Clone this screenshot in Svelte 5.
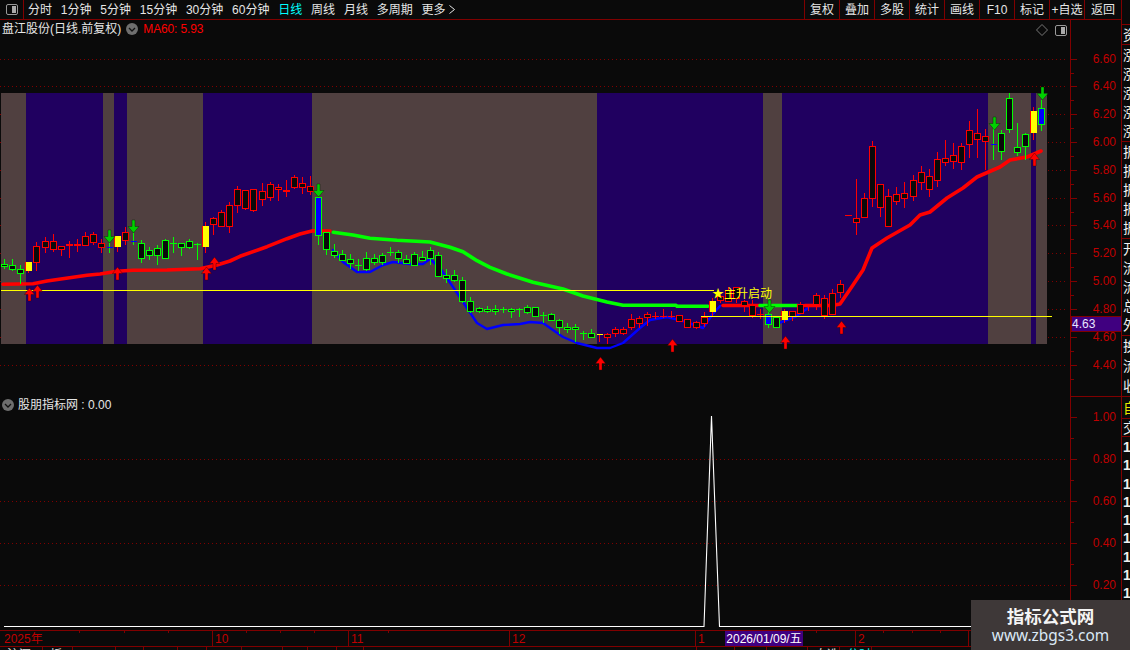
<script>
  const leftTools = [
    { t: '分时' }, { t: '1分钟' }, { t: '5分钟' }, { t: '15分钟' }, { t: '30分钟' }, { t: '60分钟' },
    { t: '日线', on: true }, { t: '周线' }, { t: '月线' }, { t: '多周期' }
  ];
  const rightTools = ['复权', '叠加', '多股', '统计', '画线', 'F10', '标记', '+自选', '返回'];

  const bands = [
    [1, 26, 'b'], [26, 103, 'p'], [103, 114, 'b'], [114, 127, 'p'], [127, 203, 'b'], [203, 312, 'p'],
    [312, 597, 'b'], [597, 763, 'p'], [763, 782, 'b'], [782, 988, 'p'], [988, 1031, 'b'], [1031, 1036, 'p'], [1036, 1047, 'b']
  ];

  const D = [
    [259.3,264.3,266.3,269.3,'g'],[259.3,264.7,269,271,'g'],[265,269.3,272.7,284,'g'],[262,262,271,273,'y'],
    [241.7,246.3,262.3,271,'r'],[237.3,241.3,246.7,252.7,'r'],[234,241.3,248.7,251.7,'r'],[246.3,246.3,248.7,256,'r'],
    [241.3,243.7,244.7,257.7,'r'],[239,243.7,244.7,251.7,'r'],[232.3,236.3,244.7,245,'r'],[232,234.3,241.7,245,'r'],
    [239,243.3,247.3,253,'r'],[243,247,247.6,253,'b'],[236,236,247,251.7,'y'],[227.3,232.3,239.7,245,'r'],
    [233,241,241.6,245,'b'],[240,243.3,257.7,262.7,'g'],[247.3,250.3,255.3,260,'g'],[245,248.3,254.7,265,'g'],
    [239.3,240.3,257.7,258.3,'g'],[237.3,243,243.3,252.7,'g'],[243.3,243.3,247.3,256,'g'],[239,241.3,247.3,249,'g'],
    [243,244,244.3,260,'g'],[222,226,247,252.7,'y'],[217.3,218.3,223.7,235,'r'],[210,212.3,225.7,225.7,'r'],
    [202,205.3,225.7,232.7,'r'],[186,189.3,204.7,212.7,'r'],[190.3,190.3,207.7,210,'r'],[189.3,189.3,209.7,211.7,'r'],
    [183,191.3,198.7,206,'r'],[181.7,184.3,196.7,201,'r'],[184.3,187.3,189.3,201,'r'],[180,190.3,190.7,196.7,'r'],
    [175.3,177.3,187.3,189,'r'],[177,183.3,186.7,193.7,'r'],[176,186.3,190.7,195,'r'],[197,197,235,245,'b'],
    [232.3,232.3,248.7,255,'g'],[244,251.3,254.7,258,'g'],[250,254.3,259.7,260.7,'g'],[254,259.3,262.7,269,'g'],
    [259,265,265,270.7,'g'],[252.3,258.3,269.3,270.7,'g'],[254,258.3,261.7,265,'g'],[253.3,255.3,261.7,265,'g'],
    [247.3,251.7,251.7,256,'g'],[250,252.3,257.7,262.7,'g'],[255,259.3,262.7,263.3,'g'],[252.3,254.3,264.7,265,'g'],
    [251,257.3,259.7,260,'g'],[247.3,250.3,257.7,265,'g'],[252.3,255.3,276.3,277.3,'g'],[269,275.3,277.7,282.7,'g'],
    [270,275.3,279.7,281.7,'g'],[277.3,280.3,301.3,302.7,'g'],[297,301.3,311.3,312.7,'g'],[306.7,308.3,311.3,312.7,'g'],
    [306,309.3,311.3,312.7,'g'],[305,309.3,311.3,315,'g'],[306.7,308.7,308.7,312.7,'g'],[308.3,309.3,311.3,318.3,'g'],
    [308.3,309,309,317,'g'],[305,307.3,312.3,314.3,'g'],[307,307.3,315.7,316.7,'g'],[311.7,314.7,314.7,322.7,'g'],
    [313.3,314.3,320.3,320.7,'g'],[319,320.3,326.7,334,'g'],[323.3,326.7,329.3,332.7,'g'],[324,327.3,329.3,341.7,'g'],
    [330.7,333.3,333.3,340,'g'],[329,333.3,337.3,337.7,'g'],[334,334,334.6,341.7,'d'],[333.3,334.3,336.7,344,'r'],
    [327.3,329.3,333.3,336.7,'r'],[327.3,329.3,333.3,335,'r'],[314.3,319.3,326.7,330,'r'],[315.7,318.3,322.7,328.3,'r'],
    [311.7,314,316.7,326,'r'],[311.7,316,316,319.3,'r'],[309,316,316,318.3,'r'],[311,316,316,318,'r'],
    [315,315.3,320.7,321.7,'r'],[319,319.3,327.3,327.7,'r'],[320.7,322.3,327.3,329,'r'],[311.7,316.7,322.7,326.7,'r'],
    [298.3,301.3,311.7,316,'y'],[295,296,300,303,'r'],[286.7,290,300.7,301.7,'r'],[287,287.3,298.3,303.3,'r'],
    [300,300.7,305.3,311.7,'r'],[300,305.3,315,318.3,'r'],[309,314,314,319.3,'r'],[298,314,324,327.7,'b'],
    [316.7,316.7,326.7,327.7,'g'],[309,311,320,323,'y'],[311.3,311.3,315.7,321,'r'],[301.7,304.3,312.7,313.3,'r'],
    [305,305,305.5,311,'r'],[293.3,295.3,304.3,310,'r'],[295,298.3,315,319.3,'r'],[289.3,293.3,314.3,315,'r'],
    [280,284.3,291.7,298.3,'r'],[215.3,215.3,215.3,215.3,'r'],[179,218.3,221.7,235,'r'],[192.7,198.3,216.7,216.7,'r'],
    [141,146.3,198.3,207.3,'r'],[184.3,184.3,207.3,216.7,'r'],[189.3,196.3,225.7,227,'r'],[187.3,194.3,201.3,205,'r'],
    [182,193.3,198.3,207.7,'r'],[175,180.3,196.3,200.7,'r'],[166.3,172.3,182.3,189.7,'r'],[169.3,176.3,189.3,196.7,'r'],
    [152,159.3,180.3,186.7,'r'],[140,158.3,162.3,165.7,'r'],[143.3,155.3,161.3,168.7,'r'],[143.3,146.3,162.3,170,'r'],
    [121,130.3,144.3,158,'r'],[109,133.3,139.3,158,'r'],[129.3,136.3,141.3,170,'r'],[118,143.5,144.2,160,'b'],
    [130,133.3,151.3,160,'g'],[93,98.3,129.3,132.7,'g'],[123,147.3,152.3,156,'g'],[133.3,134.3,146.3,160,'g'],
    [107.3,111.3,132.7,140,'y'],[100,108,124,130.7,'b']
  ];
  const candles = D.map((c, i) => {
    const x = Math.round(4.33 + 8.037 * i);
    const [hi, top, bot, lo, k] = c;
    return { x, hi: Math.round(hi), top: Math.round(top), bot: Math.round(bot), lo: Math.round(lo), k };
  });

  const pts = (a) => a.map((p) => p.join(',')).join(' ');
  const redA = pts([[3,284.3],[33,283.7],[47,281],[87,275.3],[100,274],[117,271.3],[133,270.3],[167,270],[200,268.7],[217,265],[230,261],[240,256.3],[267,246.7],[287,238.7],[300,234],[313,230.7],[330,231]]);
  const redB = pts([[723,305.5],[760,305.5]]);
  const redC = pts([[805,305.5],[832,305.5],[840,304],[853,285],[863,270],[872,248],[887,238],[910,225],[920,215],[930,212],[947,198],[963,188],[977,177],[1000,167],[1010,160],[1027,157],[1041,151]]);
  const greenA = pts([[333.3,232.3],[353,235],[370,238.3],[397,240.3],[430,242],[450,247.3],[463,251.7],[477,260.7],[490,267.3],[507,274],[533,282.3],[563,289],[583,296],[607,302],[623,305.3],[676,305.3],[677,306.3],[708,306.3]]);
  const greenB = pts([[760,305.5],[798,305.5]]);
  const blueA = pts([[333,250],[343,262],[357,272],[370,272],[383,265],[393,262],[410,264],[423,264],[430,259],[440,268],[453,287],[463,302],[477,323],[487,329],[503,325],[520,324],[530,322],[543,323],[563,337],[577,343],[597,348],[610,348],[623,343],[640,328],[650,320],[667,317],[683,321],[703,328],[712,315],[720,306]]);
  const blueB = pts([[780,322.7],[795,317],[808,308]]);

  const upArrows = [[29,288],[37,285],[117,267],[206,267],[214,257],[600,357],[672,339],[785,336],[841,321],[1034,153]];
  const downArrows = [[109,243],[133,233],[318,197],[769,313],[994,130],[1042,100]];

  const mainLevels = ['6.60','6.40','6.20','6.00','5.80','5.60','5.40','5.20','5.00','4.80','4.60','4.40']
    .map((t, i) => ({ t, y: Math.round(58.5 + 27.83 * i) }));
  const subLevels = ['1.00','0.80','0.60','0.40','0.20'].map((t, i) => ({ t, y: Math.round(416.5 + 42 * i) }));

  const minorX = [79, 124, 168, 246, 280, 314, 388, 816, 883, 912, 940];
  const months = [
    { x: 212, t: '10' }, { x: 348, t: '11' }, { x: 509, t: '12' }, { x: 695, t: '1' }, { x: 855, t: '2' }, { x: 968, t: '' }
  ];

  const sideGroups = [
    { rows: [], h: 25 },
    { rows: ['资'], h: 20 },
    { rows: ['涨', '涨', '涨', '涨', '涨'], h: 97 },
    { rows: ['振', '振', '振', '振', '振'], h: 97 },
    { rows: ['开', '流', '流', '总', '外'], h: 97 },
    { rows: ['换', '流', '收'], h: 61 },
    { rows: ['自'], h: 22, yellow: true },
    { rows: ['交'], h: 18 }
  ];
  const ones = Array.from({ length: 11 }, () => '1');
  const tabs = [
    { t: '沪深', w: 43 }, { t: '板块', w: 30 }, { w: 43 }, { w: 28 }, { w: 34 },
    { w: 29 }, { w: 35 }, { w: 41 }, { w: 25 }, { w: 29 }, { w: 27 },
    { w: 333 }, { w: 38 }, { w: 32 }, { w: 41 }, { t: '自选', w: 32 }, { t: '分时', w: 32, on: true }
  ];
</script>

<div class="app">
  <div class="left">
    <header class="toolbar">
      <div class="logo-box"><span class="panel-icon"><i></i></span></div>
      <nav class="periods">
        {#each leftTools as item}
          <span class:on={item.on}>{item.t}</span>
        {/each}
        <span class="more">更多<svg viewBox="0 0 6 9" width="6" height="9"><path d="M.5.5l5 4-5 4" fill="none" stroke="#e6e6e6"/></svg></span>
      </nav>
      <nav class="actions">
        {#each rightTools as t}
          <span>{t}</span>
        {/each}
      </nav>
    </header>

    <div class="body">
      <div class="charts">
        <section class="pane main">
          <div class="legend">
            <span class="name">盘江股份(日线.前复权)</span>
            <span class="chev"><svg viewBox="0 0 12 12" width="12" height="12"><circle cx="6" cy="6" r="6" fill="#6e6e6e"/><path d="M3 5l3 3 3-3" fill="none" stroke="#111" stroke-width="1.3"/></svg></span>
            <span class="ma">MA60: 5.93</span>
          </div>
          <div class="corner">
            <svg viewBox="0 0 12 12" width="12" height="12"><path d="M6 .5L11.5 6 6 11.5.5 6z" fill="none" stroke="#777"/></svg>
            <span class="panel-icon"><i></i></span>
          </div>
          <svg class="plot" viewBox="0 20 1070 377" width="1070" height="377">
            {#each mainLevels as l}
              <line x1="0" x2="1067" y1={l.y + 0.5} y2={l.y + 0.5} class="dots" />
            {/each}
            {#each bands as b}
              <rect x={b[0]} y="93" width={b[1] - b[0]} height="251" fill={b[2] === 'b' ? '#504040' : '#200060'} />
            {/each}
            <polyline points={blueA} class="ma-blue" />
            <polyline points={blueB} class="ma-blue" />
            <polyline points={redA} class="ma-red" />
            <polyline points={redB} class="ma-red" />
            <polyline points={redC} class="ma-red" />
            <polyline points={greenA} class="ma-green" />
            <polyline points={greenB} class="ma-green" />

            <g shape-rendering="crispEdges">
              {#each candles as c}
                {#if c.k === 'r'}
                  <line x1={c.x + 0.5} x2={c.x + 0.5} y1={c.hi} y2={c.lo} stroke="#f00" />
                  {#if c.bot - c.top < 1}
                    <line x1={c.x - 3} x2={c.x + 4} y1={c.top + 0.5} y2={c.top + 0.5} stroke="#f00" />
                  {:else}
                    <rect x={c.x - 2.5} y={c.top + 0.5} width="6" height={c.bot - c.top} fill="#0a0a0a" stroke="#f00" />
                  {/if}
                {:else if c.k === 'g'}
                  <line x1={c.x + 0.5} x2={c.x + 0.5} y1={c.hi} y2={c.lo} stroke="#0f0" />
                  {#if c.bot - c.top < 1}
                    <line x1={c.x - 3} x2={c.x + 4} y1={c.top + 0.5} y2={c.top + 0.5} stroke="#0f0" />
                  {:else}
                    <rect x={c.x - 2.5} y={c.top + 0.5} width="6" height={c.bot - c.top} fill="#0a0a0a" stroke="#0f0" />
                  {/if}
                {:else if c.k === 'y'}
                  <line x1={c.x + 0.5} x2={c.x + 0.5} y1={c.hi} y2={c.lo} stroke="#f00" />
                  <rect x={c.x - 2} y={c.top} width="6" height={c.bot - c.top} fill="#ff0" />
                  <rect x={c.x - 3} y={c.top} width="1" height={c.bot - c.top} fill="#f00" />
                {:else if c.k === 'b'}
                  <line x1={c.x + 0.5} x2={c.x + 0.5} y1={c.hi} y2={c.lo} stroke="#0f0" />
                  {#if c.bot - c.top < 2}
                    <rect x={c.x - 2} y={c.top} width="6" height="1" fill="#00f" />
                  {:else}
                    <rect x={c.x - 2.5} y={c.top + 0.5} width="6" height={c.bot - c.top} fill="#00f" stroke="#0f0" />
                  {/if}
                {:else}
                  <line x1={c.x + 0.5} x2={c.x + 0.5} y1={c.hi} y2={c.lo} stroke="#f00" />
                  <rect x={c.x - 2} y={c.top} width="6" height="1" fill="#ff0" />
                {/if}
              {/each}
              <line x1="1" x2="714" y1="290.5" y2="290.5" class="level" />
              <line x1="701" x2="1052" y1="316.5" y2="316.5" class="level" />
            </g>

            {#each upArrows as a}
              <path d="M{a[0]} {a[1]}l5 6.5h-3.5v6.5h-3v-6.5h-3.5z" transform="translate(0.5 0)" fill="#f00" stroke="#300" stroke-width="0.4" />
            {/each}
            {#each downArrows as a}
              <path d="M{a[0]} {a[1]}l-5.5 -6.5h4v-6.5h3v6.5h4z" transform="translate(0.5 0)" fill="#00d000" stroke="#020" stroke-width="0.4" />
            {/each}

            <text x="712" y="298" class="signal">★主升启动</text>
          </svg>
        </section>

        <section class="pane sub">
          <div class="legend sub-legend">
            <span class="chev"><svg viewBox="0 0 12 12" width="12" height="12"><circle cx="6" cy="6" r="6" fill="#6e6e6e"/><path d="M3 5l3 3 3-3" fill="none" stroke="#111" stroke-width="1.3"/></svg></span>
            <span class="name">股朋指标网 : 0.00</span>
          </div>
          <svg class="plot" viewBox="0 397 1070 233" width="1070" height="233">
            {#each subLevels.slice(1) as l}
              <line x1="0" x2="1067" y1={l.y + 0.5} y2={l.y + 0.5} class="dots" />
            {/each}
            <polyline points="4,626.5 704,626.5 711.5,416 719.5,626.5 1070,626.5" fill="none" stroke="#fff" stroke-width="1.1" />
          </svg>
        </section>
      </div>

      <svg class="axis" viewBox="1070 20 51 610" width="51" height="610">
        <g shape-rendering="crispEdges">
          <line x1="1070.5" x2="1070.5" y1="20" y2="630" class="axis-line" />
          <line x1="1070" x2="1121" y1="396.5" y2="396.5" class="axis-line" />
          {#each mainLevels as l}
            <line x1="1070" x2="1077" y1={l.y + 0.5} y2={l.y + 0.5} class="axis-line" />
            <line x1="1070" x2="1074" y1={l.y + 14.5} y2={l.y + 14.5} class="axis-line" />
          {/each}
          {#each subLevels as l}
            <line x1="1070" x2="1077" y1={l.y + 0.5} y2={l.y + 0.5} class="axis-line" />
            <line x1="1070" x2="1074" y1={l.y + 21.5} y2={l.y + 21.5} class="axis-line" />
          {/each}
          <rect x="1071" y="316" width="50" height="15" fill="#400080" stroke="#800000" />
        </g>
        {#each mainLevels as l}
          <text x="1116" y={l.y + 4} class="tick">{l.t}</text>
        {/each}
        {#each subLevels as l}
          <text x="1116" y={l.y + 4} class="tick">{l.t}</text>
        {/each}
        <text x="1072" y="328" class="price">4.63</text>
      </svg>
    </div>

    <div class="timeline">
      <span class="year">2025年</span>
      {#each minorX as x}
        <i class="minor" style="left:{x}px"></i>
      {/each}
      {#each months as m}
        <span class="month" style="left:{m.x}px">{m.t}</span>
      {/each}
      <span class="cursor">2026/01/09/五</span>
    </div>

    <div class="tabs">
      {#each tabs as t}
        <span class:on={t.on} style="width:{t.w}px">{t.t ?? ''}</span>
      {/each}
    </div>
  </div>

  <aside class="side">
    {#each sideGroups as g}
      <div class="group" class:yellow={g.yellow} style="height:{g.h}px">
        {#each g.rows as r}
          <span>{r}</span>
        {/each}
      </div>
    {/each}
    <div class="ones">
      {#each ones as o}
        <span>{o}</span>
      {/each}
    </div>
  </aside>

  <div class="watermark">
    <strong>指标公式网</strong>
    <span>www.zbgs3.com</span>
  </div>
</div>

<style>
  :global(body) {
    margin: 0;
    background: #0a0a0a;
    overflow: hidden;
  }
  .app {
    position: relative;
    width: 1130px;
    height: 650px;
    display: flex;
    overflow: hidden;
    background: #0a0a0a;
    color: #e6e6e6;
    font: 12px/1 "Liberation Sans", "Noto Sans CJK SC", sans-serif;
  }
  .left {
    width: 1121px;
    flex: none;
    display: flex;
    flex-direction: column;
  }
  .toolbar {
    height: 19px;
    flex: none;
    display: flex;
    align-items: stretch;
    border-bottom: 1px solid #800000;
  }
  .logo-box {
    width: 23px;
    flex: none;
    display: flex;
    align-items: center;
    justify-content: center;
    border-right: 1px solid #800000;
  }
  .panel-icon {
    display: block;
    width: 10px;
    height: 9px;
    border: 1px solid #999;
    border-radius: 2px;
    position: relative;
  }
  .panel-icon i {
    position: absolute;
    right: 1px;
    top: 1px;
    bottom: 1px;
    width: 4px;
    background: #aaa;
  }
  .periods {
    display: flex;
    align-items: center;
    gap: 8.8px;
    padding-left: 4px;
  }
  .periods .on {
    color: #00ffff;
  }
  .more {
    display: flex;
    align-items: center;
    gap: 3px;
  }
  .actions {
    margin-left: auto;
    display: flex;
    border-left: 1px solid #800000;
  }
  .actions span {
    width: 34px;
    display: flex;
    align-items: center;
    justify-content: center;
    border-right: 1px solid #800000;
  }
  .actions span:last-child {
    width: 36px;
    border-right: 0;
  }
  .body {
    display: flex;
    height: 610px;
    flex: none;
  }
  .charts {
    width: 1070px;
    flex: none;
  }
  .pane {
    position: relative;
  }
  .main {
    height: 377px;
  }
  .sub {
    height: 233px;
  }
  .plot,
  .axis {
    display: block;
  }
  .legend {
    position: absolute;
    left: 2px;
    top: 3px;
    display: flex;
    align-items: center;
    gap: 5px;
    height: 12px;
    z-index: 1;
  }
  .legend .chev {
    display: flex;
  }
  .legend .ma {
    color: #f00;
    letter-spacing: -0.15px;
  }
  .sub-legend {
    top: 2px;
    gap: 4px;
  }
  .corner {
    position: absolute;
    left: 1036px;
    top: 4px;
    display: flex;
    align-items: center;
    gap: 7px;
    z-index: 1;
  }
  .dots {
    stroke: #800000;
    stroke-width: 1;
    stroke-dasharray: 1 3;
  }
  .ma-red,
  .ma-green,
  .ma-blue {
    fill: none;
    stroke-linejoin: round;
    stroke-linecap: round;
  }
  .ma-red {
    stroke: #f00;
    stroke-width: 3.6;
  }
  .ma-green {
    stroke: #0f0;
    stroke-width: 3.6;
  }
  .ma-blue {
    stroke: #00f;
    stroke-width: 2.4;
  }
  .level {
    stroke: #ff0;
    stroke-width: 1;
  }
  .signal {
    fill: #ff0;
    font: 12px "Liberation Sans", "Noto Sans CJK SC", sans-serif;
  }
  .axis-line {
    stroke: #800000;
    stroke-width: 1;
    fill: none;
  }
  .tick {
    fill: #c00000;
    font: 12px "Liberation Sans", sans-serif;
    text-anchor: end;
  }
  .price {
    fill: #e8e8ff;
    font: 12px "Liberation Sans", sans-serif;
  }
  .timeline {
    position: relative;
    height: 15px;
    flex: none;
    border-top: 1px solid #800000;
    border-bottom: 1px solid #800000;
    color: #c00000;
    line-height: 15px;
  }
  .year {
    position: absolute;
    left: 4px;
    top: 1px;
  }
  .minor {
    position: absolute;
    top: 0;
    width: 1px;
    height: 2px;
    background: #800000;
  }
  .month {
    position: absolute;
    top: 0;
    height: 15px;
    padding-left: 2px;
    border-left: 1px solid #800000;
    line-height: 16px;
  }
  .cursor {
    position: absolute;
    left: 725px;
    top: 0;
    width: 78px;
    height: 15px;
    background: #400080;
    color: #fff;
    text-align: center;
    line-height: 16px;
  }
  .tabs {
    display: flex;
    height: 3px;
    overflow: hidden;
    color: #e6e6e6;
    line-height: 17px;
  }
  .tabs span {
    flex: none;
    box-sizing: border-box;
    border-right: 1px solid #800000;
    padding-left: 7px;
  }
  .tabs .on {
    color: #00ffff;
  }
  .side {
    width: 9px;
    flex: none;
    box-sizing: border-box;
    border-left: 1px solid #800000;
    overflow: hidden;
    color: #f0f0f0;
    font-size: 14px;
  }
  .group {
    box-sizing: border-box;
    border-bottom: 1px solid #800000;
    overflow: hidden;
    padding-left: 1px;
    display: flex;
    flex-direction: column;
    justify-content: space-around;
  }
  .group span,
  .ones span {
    display: block;
    white-space: nowrap;
    width: 20px;
  }
  .yellow {
    color: #e8e800;
  }
  .ones {
    padding-left: 1px;
    padding-top: 1px;
    font-weight: 700;
  }
  .ones span {
    height: 18.3px;
    line-height: 18px;
  }
  .watermark {
    position: absolute;
    left: 971px;
    top: 600px;
    width: 159px;
    height: 50px;
    background: #3e3838;
    display: flex;
    flex-direction: column;
    align-items: center;
    gap: 3px;
    padding-top: 7px;
    box-sizing: border-box;
  }
  .watermark strong {
    color: #f4f4f4;
    font: 700 17.5px/18px "Noto Sans CJK SC", sans-serif;
  }
  .watermark span {
    color: #dbe9f6;
    font: 15.4px/16px "Noto Sans", sans-serif;
  }
</style>
